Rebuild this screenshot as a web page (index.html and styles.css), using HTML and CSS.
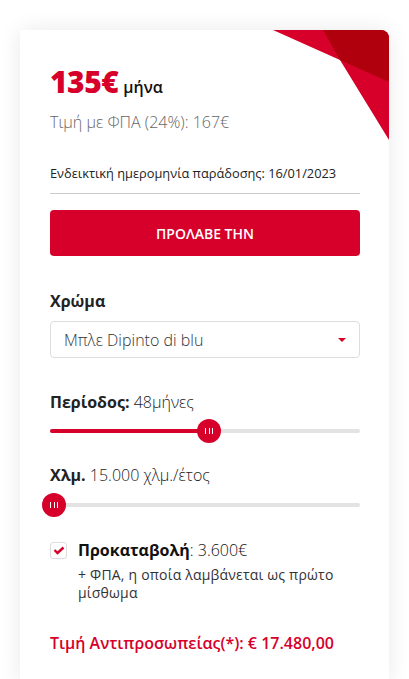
FILE: index.html
```html
<!DOCTYPE html>
<html lang="el">
<head>
    <meta charset="UTF-8">
    <meta name="viewport" content="width=device-width, initial-scale=1.0">
    <title>Προσφορά μίσθωσης</title>
    <link rel="stylesheet" href="styles.css">
</head>
<body>
    <div class="card">
        <svg class="corner" width="116" height="110" viewBox="0 0 116 110">
            <polygon points="0,0 116,0 116,110 67,30" fill="#d6002a"/>
            <polygon points="50,0 116,0 116,52 67,30" fill="#b0000d"/>
        </svg>

        <div class="price">
            <span class="price-value">135€</span>
            <span class="price-unit">μήνα</span>
        </div>
        <div class="price-vat">Τιμή με ΦΠΑ (24%): 167€</div>

        <div class="delivery">Ενδεικτική ημερομηνία παράδοσης: 16/01/2023</div>

        <button class="cta">ΠΡΟΛΑΒΕ ΤΗΝ</button>

        <div class="field-label">Χρώμα</div>
        <div class="select">
            <span>Μπλε Dipinto di blu</span>
            <span class="caret"></span>
        </div>

        <div class="slider-label"><b>Περίοδος:</b> 48μήνες</div>
        <div class="slider">
            <div class="slider-fill" style="width: 51.3%"></div>
            <div class="thumb" style="left: 51.3%"><i></i><i></i><i></i></div>
        </div>

        <div class="slider-label"><b>Χλμ.</b> 15.000 χλμ./έτος</div>
        <div class="slider">
            <div class="slider-fill" style="width: 0%"></div>
            <div class="thumb" style="left: 1.3%"><i></i><i></i><i></i></div>
        </div>

        <div class="downpayment">
            <div class="checkbox">
                <svg width="12" height="9" viewBox="0 0 12 9">
                    <polyline points="1.5,4 4.5,7 10.5,1.5" fill="none" stroke="#d6002a" stroke-width="2.4"/>
                </svg>
            </div>
            <div class="downpayment-text">
                <div class="downpayment-main"><b>Προκαταβολή</b>: 3.600€</div>
                <div class="downpayment-note">+ ΦΠΑ, η οποία λαμβάνεται ως πρώτο μίσθωμα</div>
            </div>
        </div>

        <div class="dealer-price">Τιμή Αντιπροσωπείας(*): € 17.480,00</div>
    </div>
</body>
</html>
```

FILE: styles.css
```css
body {
    margin: 0;
    padding: 30px 20px 0;
    background: #fff;
    font-family: 'Open Sans', 'Noto Sans', sans-serif;
    color: #222;
}
.card {
    position: relative;
    background: white;
    border-radius: 0 8px 0 0;
    box-shadow: 0 0 22px rgba(0,0,0,0.09);
    padding: 34px 29px 30px 30px;
    overflow: hidden;
}
.corner {
    position: absolute;
    top: 0;
    right: 0;
}
.price {
    display: flex;
    align-items: baseline;
    gap: 5px;
    line-height: 36px;
}
.price-value {
    color: #d6002a;
    font-size: 30px;
    font-weight: 800;
    letter-spacing: -0.5px;
}
.price-unit {
    font-size: 16px;
    font-weight: 600;
    color: #111;
}
.price-vat {
    margin-top: 6px;
    font-size: 16px;
    line-height: 22px;
    font-weight: 300;
    color: #666;
}
.delivery {
    margin-top: 31px;
    padding-bottom: 11px;
    border-bottom: 1px solid #ccc;
    font-size: 12.8px;
    line-height: 18px;
    color: #222;
}
.cta {
    display: block;
    width: 100%;
    height: 46px;
    margin-top: 16px;
    background: #d6002a;
    color: white;
    border: none;
    border-radius: 4px;
    font-family: inherit;
    font-size: 14px;
    font-weight: 600;
}
.field-label {
    margin-top: 34px;
    font-size: 16px;
    line-height: 22px;
    font-weight: 700;
    color: #222;
}
.select {
    display: flex;
    justify-content: space-between;
    align-items: center;
    height: 37px;
    margin-top: 9px;
    padding: 0 13px 0 13px;
    border: 1px solid #ddd;
    border-radius: 4px;
    box-sizing: border-box;
    font-size: 16px;
    font-weight: 300;
    color: #333;
}
.caret {
    width: 0;
    height: 0;
    border-left: 4px solid transparent;
    border-right: 4px solid transparent;
    border-top: 4px solid #d6002a;
}
.slider-label {
    margin-top: 33px;
    font-size: 16px;
    line-height: 22px;
    font-weight: 300;
    color: #222;
}
.slider-label b {
    font-weight: 700;
}
.slider + .slider-label {
    margin-top: 31px;
}
.slider {
    position: relative;
    height: 4px;
    margin: 16px 0 0;
    background: #e3e3e3;
    border-radius: 2px;
}
.slider + .slider-label + .slider {
    margin-top: 17px;
}
.slider-fill {
    height: 4px;
    background: #d6002a;
    border-radius: 2px;
}
.thumb {
    position: absolute;
    top: 2px;
    width: 24px;
    height: 24px;
    margin: -12px 0 0 -12px;
    background: #d6002a;
    border-radius: 50%;
    display: flex;
    justify-content: center;
    align-items: center;
    gap: 2.5px;
}
.thumb i {
    width: 1px;
    height: 6px;
    background: white;
}
.downpayment {
    display: flex;
    gap: 11px;
    margin-top: 32px;
}
.checkbox {
    flex: none;
    width: 17px;
    height: 17px;
    margin-top: 3px;
    border: 1px solid #ddd;
    border-radius: 3px;
    box-sizing: border-box;
    display: flex;
    justify-content: center;
    align-items: center;
}
.downpayment-main {
    font-size: 16px;
    line-height: 22px;
    font-weight: 300;
    color: #111;
}
.downpayment-main b {
    font-weight: 700;
}
.downpayment-note {
    margin-top: 5px;
    font-size: 14px;
    letter-spacing: 0.2px;
    line-height: 18px;
    color: #333;
}
.dealer-price {
    margin-top: 30px;
    color: #d6002a;
    font-size: 16px;
    line-height: 22px;
    font-weight: 600;
}
```
